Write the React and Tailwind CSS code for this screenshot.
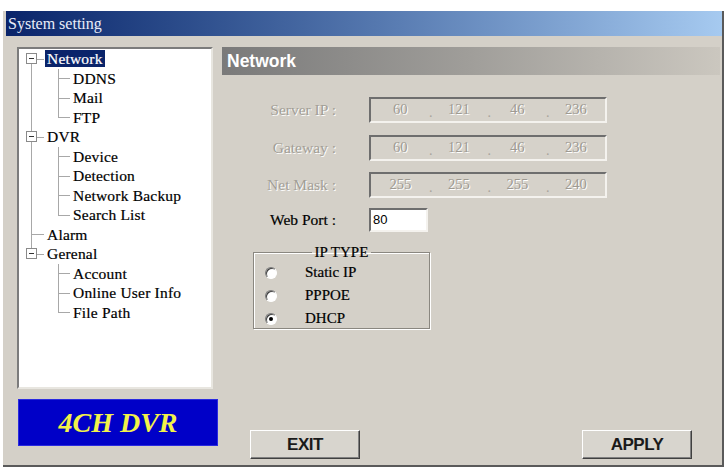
import React from "react";

const serif = { fontFamily: '"Liberation Serif", "Times New Roman", serif' };
const sans = { fontFamily: '"Liberation Sans", Arial, sans-serif' };

const rows = [
  { level: 0, text: "Network", box: true, selected: true, vTop: false, vBottom: true },
  { level: 1, text: "DDNS", cont: true, last: false },
  { level: 1, text: "Mail", cont: true, last: false },
  { level: 1, text: "FTP", cont: true, last: true },
  { level: 0, text: "DVR", box: true, vTop: true, vBottom: true },
  { level: 1, text: "Device", cont: true, last: false },
  { level: 1, text: "Detection", cont: true, last: false },
  { level: 1, text: "Network Backup", cont: true, last: false },
  { level: 1, text: "Search List", cont: true, last: true },
  { level: 0, text: "Alarm", box: false, vTop: true, vBottom: true },
  { level: 0, text: "Gerenal", box: true, vTop: true, vBottom: false },
  { level: 1, text: "Account", cont: false, last: false },
  { level: 1, text: "Online User Info", cont: false, last: false },
  { level: 1, text: "File Path", cont: false, last: true },
];

function TreeRow({ r }) {
  if (r.level === 0) {
    return (
      <div className="flex h-[19.5px] items-center">
        <div className="relative h-full w-[25px] shrink-0">
          {r.vTop && <span className="absolute left-[12px] top-0 h-1/2 w-px bg-[#a8a8a8]" />}
          {r.vBottom && <span className="absolute left-[12px] top-1/2 bottom-0 w-px bg-[#a8a8a8]" />}
          <span className="absolute left-[12px] right-0 top-1/2 h-px bg-[#a8a8a8]" />
          {r.box && (
            <span className="absolute left-[7px] top-1/2 -mt-[5.5px] flex h-[11px] w-[11px] items-center justify-center border border-[#8a8a8a] bg-white">
              <span className="h-px w-[5px] bg-[#333]" />
            </span>
          )}
        </div>
        <span
          className={
            "ml-px px-[2px] text-[15.5px] leading-[17px] tracking-[0.2px] [-webkit-text-stroke:0.2px_currentColor] " +
            (r.selected ? "bg-[#0a246a] text-white" : "text-black")
          }
        >
          {r.text}
        </span>
      </div>
    );
  }
  return (
    <div className="flex h-[19.5px] items-center">
      <div className="relative h-full w-[25px] shrink-0">
        {r.cont && <span className="absolute left-[12px] top-0 bottom-0 w-px bg-[#a8a8a8]" />}
      </div>
      <div className="relative h-full w-[28px] shrink-0">
        <span className="absolute left-[14px] top-0 h-1/2 w-px bg-[#a8a8a8]" />
        {!r.last && <span className="absolute left-[14px] top-1/2 bottom-0 w-px bg-[#a8a8a8]" />}
        <span className="absolute left-[14px] right-[2px] top-1/2 h-px bg-[#a8a8a8]" />
      </div>
      <span className="ml-px text-[15.5px] leading-[17px] tracking-[0.2px] text-black [-webkit-text-stroke:0.2px_currentColor]">
        {r.text}
      </span>
    </div>
  );
}

function IpField({ label, values }) {
  return (
    <div className="flex h-[26px] items-center">
      <div
        className="w-[115px] pr-[1px] text-right text-[15.5px] text-[#a29e96] [text-shadow:1px_1px_0_#ffffff]"
        style={serif}
      >
        {label}
      </div>
      <div className="ml-[32px] flex h-[26px] w-[238px] border-2 border-t-[#6e6e6e] border-l-[#6e6e6e] border-b-[#f4f2ee] border-r-[#f4f2ee] bg-[#d6d2ca]">
        {values.map((v, i) => (
          <div key={i} className="relative flex flex-1 items-center justify-center">
            <span
              className="text-[14.5px] text-[#9e9a92] [text-shadow:1px_1px_0_#ffffff]"
              style={serif}
            >
              {v}
            </span>
            {i < 3 && (
              <span
                className="absolute right-[-3px] top-[3px] text-[14px] text-[#a8a49c]"
                style={serif}
              >
                .
              </span>
            )}
          </div>
        ))}
      </div>
    </div>
  );
}

function Radio({ checked, label }) {
  return (
    <div className="flex h-[23px] items-center">
      <span className="ml-[11px] flex h-[12px] w-[12px] items-center justify-center rounded-full border border-t-[#7a7a7a] border-l-[#7a7a7a] border-b-white border-r-white bg-white shadow-[inset_1px_1px_0_#404040]">
        {checked && <span className="h-[4px] w-[4px] rounded-full bg-black" />}
      </span>
      <span className="ml-[28px] text-[15px] text-black [-webkit-text-stroke:0.2px_currentColor]" style={serif}>
        {label}
      </span>
    </div>
  );
}

function Button({ children }) {
  return (
    <button
      className="flex h-[29px] w-[110px] items-center justify-center border border-t-white border-l-white border-b-[#404040] border-r-[#404040] bg-[#d8d5ce] text-[17px] font-bold tracking-[-0.5px] text-[#1a1a1a] shadow-[inset_-1px_-1px_0_#808080]"
      style={sans}
    >
      {children}
    </button>
  );
}

export default function App() {
  return (
    <div className="h-[470px] w-[726px] overflow-hidden bg-white pt-[11px]" style={serif}>
      <div className="ml-[3px] flex h-[456px] w-[721px] flex-col border-r-2 border-b-2 border-[#5a5a5a] bg-[#d4d0c8] pl-[3px]">
        <div
          className="flex h-[25px] shrink-0 items-center bg-gradient-to-r from-[#0a246a] to-[#a6caf0] pl-[2px] text-[16px] text-[#e8ecf8]"
          style={serif}
        >
          System setting
        </div>
        <div className="flex min-h-0 flex-1">
          <div className="flex w-[216px] shrink-0 flex-col pl-[11px] pt-[11px]">
            <div className="h-[342px] w-[196px] border-2 border-t-[#7c7c7c] border-l-[#7c7c7c] border-b-[#e8e6e0] border-r-[#e8e6e0] bg-white">
              {rows.map((r, i) => (
                <TreeRow key={i} r={r} />
              ))}
            </div>
            <div className="ml-px mt-[10px] flex h-[47px] w-[200px] items-center justify-center border border-[#2a2ae0] bg-[#0000c8]">
              <span
                className="text-[28px] font-bold italic text-[#f2f24a]"
                style={serif}
              >
                4CH DVR
              </span>
            </div>
          </div>
          <div className="flex min-w-0 flex-1 flex-col pr-[2px] pt-[11px]">
            <div
              className="flex h-[28px] shrink-0 items-center bg-gradient-to-r from-[#7a7a7a] via-[#a09e9a] to-[#cbc7bf] pl-[5px] text-[17.5px] font-bold text-white"
              style={sans}
            >
              Network
            </div>
            <div className="mt-[22px] flex flex-col gap-[11.5px]">
              <IpField label="Server IP :" values={["60", "121", "46", "236"]} />
              <IpField label="Gateway :" values={["60", "121", "46", "236"]} />
              <IpField label="Net Mask :" values={["255", "255", "255", "240"]} />
            </div>
            <div className="mt-[10px] flex h-[24px] items-center">
              <div className="w-[115px] pr-[1px] text-right text-[15.5px] text-black [-webkit-text-stroke:0.2px_currentColor]" style={serif}>
                Web Port :
              </div>
              <div className="ml-[32px] flex h-[24px] w-[59px] items-center border-2 border-t-[#6e6e6e] border-l-[#6e6e6e] border-b-[#f4f2ee] border-r-[#f4f2ee] bg-white pl-[2px] text-[13px] text-black" style={sans}>
                80
              </div>
            </div>
            <fieldset className="ml-[31px] mt-[11px] h-[86px] w-[177px] border border-[#8a8780] pb-[1px] shadow-[1px_1px_0_#ffffff,inset_1px_1px_0_#ffffff]">
              <legend className="mx-auto px-[3px] text-[15px] leading-[18px] text-black [-webkit-text-stroke:0.2px_currentColor]" style={serif}>
                IP TYPE
              </legend>
              <Radio label="Static IP" />
              <Radio label="PPPOE" />
              <Radio checked label="DHCP" />
            </fieldset>
            <div className="flex-1" />
            <div className="flex justify-between pb-[6px] pl-[28px] pr-[28px]">
              <Button>EXIT</Button>
              <Button>APPLY</Button>
            </div>
          </div>
        </div>
      </div>
    </div>
  );
}
